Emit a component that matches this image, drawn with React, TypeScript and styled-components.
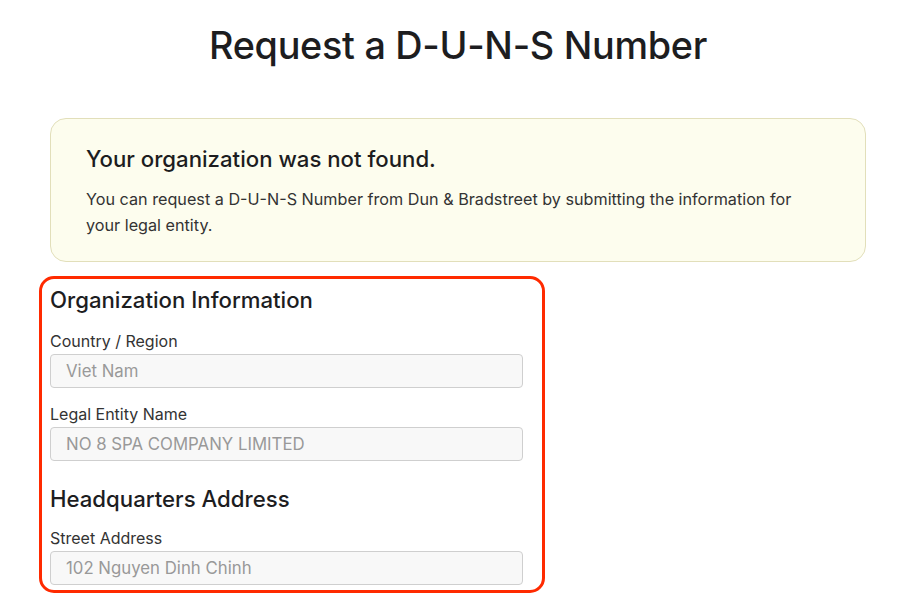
import styled, { createGlobalStyle } from "styled-components";

const GlobalStyle = createGlobalStyle`
    body {
        margin: 0;
        background: #ffffff;
        font-family: Inter, "Noto Sans", "Liberation Sans", sans-serif;
        color: #1d1d1f;
    }
`;

interface IField {
    label: string;
    value: string;
}

const orgFields: IField[] = [
    { label: "Country / Region", value: "Viet Nam" },
    { label: "Legal Entity Name", value: "NO 8 SPA COMPANY LIMITED" },
];

const addressFields: IField[] = [
    { label: "Street Address", value: "102 Nguyen Dinh Chinh" },
];

const Field = ({ label, value }: IField) => (
    <FieldGroup>
        <Label>{label}</Label>
        <Input value={value} disabled readOnly />
    </FieldGroup>
);

const App = () => {
    return (
        <>
            <GlobalStyle />
            <Page>
                <Title>Request a D-U-N-S Number</Title>
                <Notice>
                    <NoticeTitle>Your organization was not found.</NoticeTitle>
                    <NoticeText>
                        You can request a D-U-N-S Number from Dun &amp; Bradstreet by submitting the information for your legal entity.
                    </NoticeText>
                </Notice>
                <Highlight>
                    <SectionTitle>Organization Information</SectionTitle>
                    {orgFields.map((f) => (
                        <Field key={f.label} {...f} />
                    ))}
                    <SectionTitle $spaced>Headquarters Address</SectionTitle>
                    {addressFields.map((f) => (
                        <Field key={f.label} {...f} />
                    ))}
                </Highlight>
            </Page>
        </>
    );
};

const Page = styled.div`
    width: 816px;
    padding: 0 0 0 50px;
    display: flex;
    flex-direction: column;
`;

const Title = styled.h1`
    margin: 23px 0 0;
    text-align: center;
    font-size: 37.8px;
    font-weight: 500;
    line-height: 44px;
    letter-spacing: -0.3px;
    color: #1d1d1f;
`;

const Notice = styled.div`
    margin-top: 51px;
    height: 144px;
    box-sizing: border-box;
    padding: 27px 35px 0;
    background-color: #fdfdee;
    border: 1px solid #e2dfba;
    border-radius: 16px;
`;

const NoticeTitle = styled.h3`
    margin: 0;
    font-size: 22.2px;
    font-weight: 500;
    line-height: 26px;
    color: #1d1d1f;
`;

const NoticeText = styled.p`
    margin: 14px 0 0;
    font-size: 16.2px;
    line-height: 26px;
    color: #333333;
    max-width: 720px;
`;

const Highlight = styled.div`
    margin: 14px 0 0 -11px;
    width: 506px;
    box-sizing: border-box;
    padding: 8px 19px 5px 8px;
    border: 3px solid #ff2a00;
    border-radius: 15px;
    display: flex;
    flex-direction: column;
`;

const SectionTitle = styled.h3<{ $spaced?: boolean }>`
    margin: ${(p) => (p.$spaced ? "25px" : "0")} 0 0;
    font-size: 22.2px;
    font-weight: 500;
    line-height: 26px;
    color: #1d1d1f;
`;

const FieldGroup = styled.div`
    margin-top: 15px;
    display: flex;
    flex-direction: column;

    &:first-of-type {
        margin-top: 17px;
    }
`;

const Label = styled.label`
    font-size: 16px;
    line-height: 22px;
    color: #333333;
    margin-bottom: 2px;
`;

const Input = styled.input`
    height: 34px;
    box-sizing: border-box;
    padding: 0 15px;
    font-family: inherit;
    font-size: 16.8px;
    color: #999999;
    background-color: #f8f8f8;
    border: 1px solid #cfcfcf;
    border-radius: 4px;
    -webkit-text-fill-color: #999999;
    opacity: 1;
`;

export default App;
